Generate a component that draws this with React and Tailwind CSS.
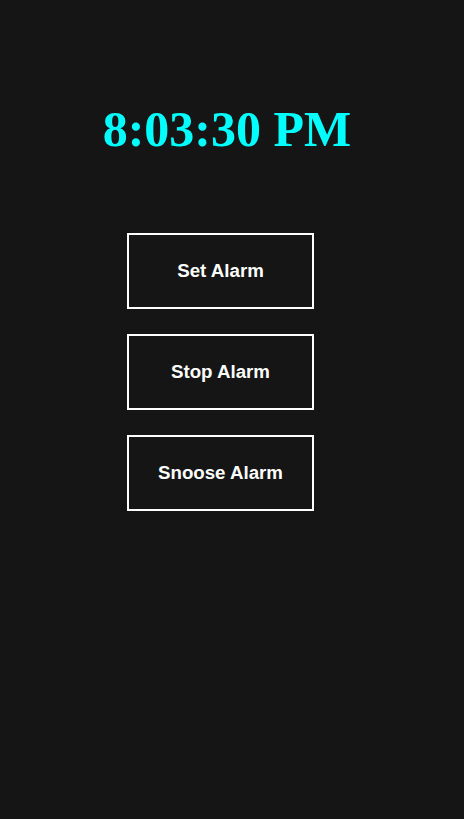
import React, { useState } from 'react';

const buttons = ['Set Alarm', 'Stop Alarm', 'Snoose Alarm'];

export default function App() {
    const [time] = useState('8:03:30 PM');

    return (
        <div className="min-h-screen w-full bg-[#151515] pt-[101px]">
            <div className="w-[454px] text-center font-['Liberation_Serif',serif] text-[50px] font-bold leading-[56px] text-[#00ffff]">
                {time}
            </div>

            <div className="mt-[76px] ml-[127px] flex w-[187px] flex-col gap-[25px]">
                {buttons.map((label) => (
                    <button
                        key={label}
                        className="h-[76px] w-[187px] border-2 border-white bg-transparent font-['Liberation_Sans',Arial,sans-serif] text-[18.7px] font-bold text-white"
                    >
                        {label}
                    </button>
                ))}
            </div>
        </div>
    );
}
